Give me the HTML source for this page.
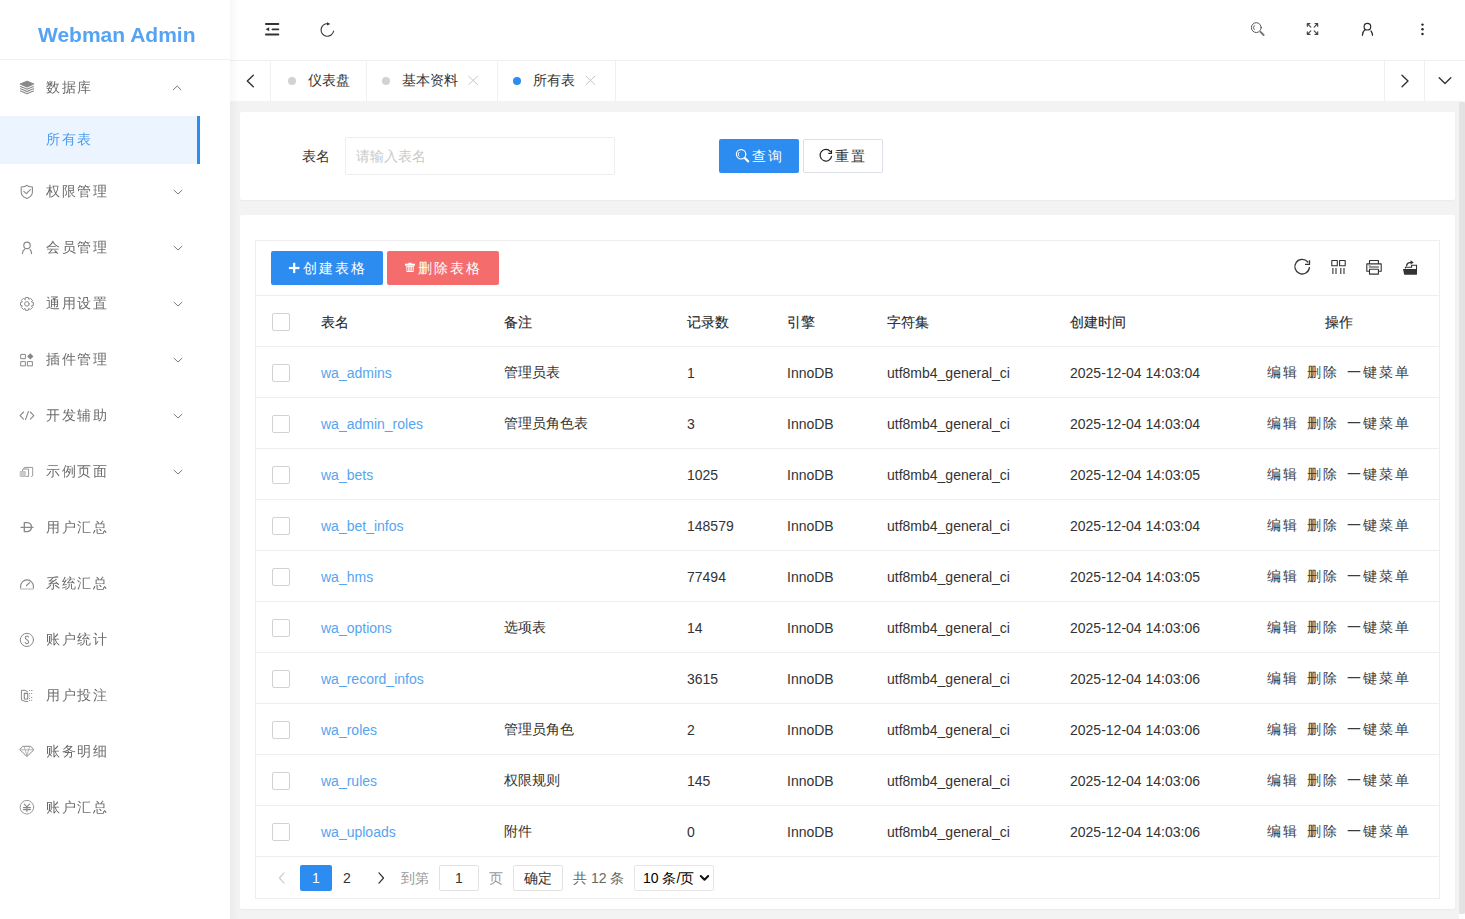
<!DOCTYPE html>
<html><head><meta charset="utf-8">
<style>
*{box-sizing:border-box;margin:0;padding:0}
html,body{width:1465px;height:919px;overflow:hidden;background:#fff}
body{font-family:"Liberation Sans",sans-serif;font-size:14px;color:#333;position:relative}
.a{position:absolute;white-space:nowrap;line-height:20px}
#content{position:absolute;left:230px;top:101px;width:1235px;height:818px;background:#f3f3f3}
#side{position:absolute;left:0;top:0;width:230px;height:919px;background:#fff}
#logo{position:absolute;left:0;top:0;width:230px;height:60px;border-bottom:1px solid #f2f2f2}
#logo span{position:absolute;left:38px;top:20px;font-size:21px;font-weight:bold;color:#55a3f2;line-height:30px;white-space:nowrap;will-change:transform}
.mi{position:absolute;left:46px;line-height:20px;font-size:14px;color:#6b6b6b;letter-spacing:1.5px;white-space:nowrap;will-change:transform}
.sel{position:absolute;left:0;top:116px;width:200px;height:48px;background:#ecf5ff}
.sel i{position:absolute;right:0;top:0;width:3px;height:48px;background:#2d8cf0}
#shadow{position:absolute;left:230px;top:0;width:9px;height:919px;background:linear-gradient(to right,rgba(0,0,0,.035),rgba(0,0,0,0))}
#hdr{position:absolute;left:230px;top:0;width:1235px;height:61px;background:#fff;border-bottom:1px solid #f0f0f0}
#tabs{position:absolute;left:230px;top:61px;width:1235px;height:40px;background:#fff}
.tsep{position:absolute;top:61px;width:1px;height:40px;background:#f0f0f0}
.tdot{position:absolute;width:8px;height:8px;border-radius:50%;background:#d2d2d2;top:77px}
.ttx{position:absolute;top:70.5px;line-height:20px;font-size:13.5px;color:#333;white-space:nowrap}
.card{position:absolute;background:#fff;border-radius:2px;box-shadow:0 1px 2px rgba(0,0,0,.04)}
.btn{position:absolute;height:34px;border-radius:2px}
.bt{position:absolute;line-height:20px;color:#fff;letter-spacing:2px;white-space:nowrap}
.th{color:#262626;-webkit-text-stroke:0.12px #262626}
.row{position:absolute;left:256px;width:1183px;height:1px;background:#eee}
.cb{position:absolute;left:272px;width:18px;height:18px;border:1px solid #d2d2d2;border-radius:2px;background:#fff}
.lk{color:#56a5f0}
.op{color:#3c3c3c;letter-spacing:2px}
.pg{position:absolute;top:865px;height:26px;border:1px solid #e2e2e2;border-radius:2px;background:#fff}
</style></head><body>
<div id="content"></div>
<div id="side">
<div id="logo"><span>Webman Admin</span></div>
<div class="sel"><i></i></div>
<div class="mi" style="top:77px">数据库</div>
<div class="mi" style="top:129px;color:#4a9cf0">所有表</div>
<div class="mi" style="top:181px">权限管理</div>
<div class="mi" style="top:237px">会员管理</div>
<div class="mi" style="top:293px">通用设置</div>
<div class="mi" style="top:349px">插件管理</div>
<div class="mi" style="top:405px">开发辅助</div>
<div class="mi" style="top:461px">示例页面</div>
<div class="mi" style="top:517px">用户汇总</div>
<div class="mi" style="top:573px">系统汇总</div>
<div class="mi" style="top:629px">账户统计</div>
<div class="mi" style="top:685px">用户投注</div>
<div class="mi" style="top:741px">账务明细</div>
<div class="mi" style="top:797px">账户汇总</div>
</div>
<div id="hdr"></div>
<div id="tabs"></div>
<div id="shadow"></div>
<div class="tsep" style="left:270px"></div>
<div class="tsep" style="left:366px"></div>
<div class="tsep" style="left:497px"></div>
<div class="tsep" style="left:615px"></div>
<div class="tsep" style="left:1384px"></div>
<div class="tsep" style="left:1424px"></div>
<div class="tdot" style="left:288px"></div><div class="ttx" style="left:308px">仪表盘</div>
<div class="tdot" style="left:382px"></div><div class="ttx" style="left:402px">基本资料</div>
<div class="tdot" style="left:513px;background:#2d8cf0"></div><div class="ttx" style="left:533px">所有表</div>
<div class="card" style="left:240px;top:112px;width:1215px;height:88px"></div>
<div class="a" style="left:302px;top:146px">表名</div>
<div class="a" style="left:345px;top:137px;width:270px;height:38px;border:1px solid #eee;border-radius:2px;background:#fff"></div>
<div class="a" style="left:356px;top:146px;color:#c9c9c9">请输入表名</div>
<div class="btn" style="left:719px;top:139px;width:80px;background:#2d8cf0"></div>
<div class="bt" style="left:752px;top:146px">查询</div>
<div class="btn" style="left:803px;top:139px;width:80px;background:#fff;border:1px solid #dcdfe6"></div>
<div class="bt" style="left:835px;top:146px;color:#333">重置</div>
<div class="card" style="left:240px;top:215px;width:1215px;height:694px"></div>
<div class="a" style="left:255px;top:240px;width:1185px;height:659px;border:1px solid #eee"></div>
<div class="row" style="top:295px"></div>
<div class="btn" style="left:271px;top:251px;width:112px;background:#2d8cf0"></div>
<div class="bt" style="left:303px;top:258px">创建表格</div>
<div class="btn" style="left:387px;top:251px;width:112px;background:#f56c6c"></div>
<div class="bt" style="left:418px;top:258px">删除表格</div>
<div class="cb" style="top:313px"></div>
<div class="a th" style="left:321px;top:312px">表名</div>
<div class="a th" style="left:504px;top:312px">备注</div>
<div class="a th" style="left:687px;top:312px">记录数</div>
<div class="a th" style="left:787px;top:312px">引擎</div>
<div class="a th" style="left:887px;top:312px">字符集</div>
<div class="a th" style="left:1070px;top:312px">创建时间</div>
<div class="a th" style="left:1325px;top:312px">操作</div>
<div class="row" style="top:346px"></div>
<div class="cb" style="top:364px"></div>
<div class="a lk" style="left:321px;top:363px">wa_admins</div>
<div class="a" style="left:504px;top:362px">管理员表</div>
<div class="a" style="left:687px;top:363px">1</div>
<div class="a" style="left:787px;top:363px">InnoDB</div>
<div class="a" style="left:887px;top:363px">utf8mb4_general_ci</div>
<div class="a" style="left:1070px;top:363px">2025-12-04 14:03:04</div>
<div class="a op" style="left:1267px;top:362px">编辑</div>
<div class="a op" style="left:1307px;top:362px">删除</div>
<div class="a op" style="left:1347px;top:362px">一键菜单</div>
<div class="row" style="top:397px"></div>
<div class="cb" style="top:415px"></div>
<div class="a lk" style="left:321px;top:414px">wa_admin_roles</div>
<div class="a" style="left:504px;top:413px">管理员角色表</div>
<div class="a" style="left:687px;top:414px">3</div>
<div class="a" style="left:787px;top:414px">InnoDB</div>
<div class="a" style="left:887px;top:414px">utf8mb4_general_ci</div>
<div class="a" style="left:1070px;top:414px">2025-12-04 14:03:04</div>
<div class="a op" style="left:1267px;top:413px">编辑</div>
<div class="a op" style="left:1307px;top:413px">删除</div>
<div class="a op" style="left:1347px;top:413px">一键菜单</div>
<div class="row" style="top:448px"></div>
<div class="cb" style="top:466px"></div>
<div class="a lk" style="left:321px;top:465px">wa_bets</div>
<div class="a" style="left:687px;top:465px">1025</div>
<div class="a" style="left:787px;top:465px">InnoDB</div>
<div class="a" style="left:887px;top:465px">utf8mb4_general_ci</div>
<div class="a" style="left:1070px;top:465px">2025-12-04 14:03:05</div>
<div class="a op" style="left:1267px;top:464px">编辑</div>
<div class="a op" style="left:1307px;top:464px">删除</div>
<div class="a op" style="left:1347px;top:464px">一键菜单</div>
<div class="row" style="top:499px"></div>
<div class="cb" style="top:517px"></div>
<div class="a lk" style="left:321px;top:516px">wa_bet_infos</div>
<div class="a" style="left:687px;top:516px">148579</div>
<div class="a" style="left:787px;top:516px">InnoDB</div>
<div class="a" style="left:887px;top:516px">utf8mb4_general_ci</div>
<div class="a" style="left:1070px;top:516px">2025-12-04 14:03:04</div>
<div class="a op" style="left:1267px;top:515px">编辑</div>
<div class="a op" style="left:1307px;top:515px">删除</div>
<div class="a op" style="left:1347px;top:515px">一键菜单</div>
<div class="row" style="top:550px"></div>
<div class="cb" style="top:568px"></div>
<div class="a lk" style="left:321px;top:567px">wa_hms</div>
<div class="a" style="left:687px;top:567px">77494</div>
<div class="a" style="left:787px;top:567px">InnoDB</div>
<div class="a" style="left:887px;top:567px">utf8mb4_general_ci</div>
<div class="a" style="left:1070px;top:567px">2025-12-04 14:03:05</div>
<div class="a op" style="left:1267px;top:566px">编辑</div>
<div class="a op" style="left:1307px;top:566px">删除</div>
<div class="a op" style="left:1347px;top:566px">一键菜单</div>
<div class="row" style="top:601px"></div>
<div class="cb" style="top:619px"></div>
<div class="a lk" style="left:321px;top:618px">wa_options</div>
<div class="a" style="left:504px;top:617px">选项表</div>
<div class="a" style="left:687px;top:618px">14</div>
<div class="a" style="left:787px;top:618px">InnoDB</div>
<div class="a" style="left:887px;top:618px">utf8mb4_general_ci</div>
<div class="a" style="left:1070px;top:618px">2025-12-04 14:03:06</div>
<div class="a op" style="left:1267px;top:617px">编辑</div>
<div class="a op" style="left:1307px;top:617px">删除</div>
<div class="a op" style="left:1347px;top:617px">一键菜单</div>
<div class="row" style="top:652px"></div>
<div class="cb" style="top:670px"></div>
<div class="a lk" style="left:321px;top:669px">wa_record_infos</div>
<div class="a" style="left:687px;top:669px">3615</div>
<div class="a" style="left:787px;top:669px">InnoDB</div>
<div class="a" style="left:887px;top:669px">utf8mb4_general_ci</div>
<div class="a" style="left:1070px;top:669px">2025-12-04 14:03:06</div>
<div class="a op" style="left:1267px;top:668px">编辑</div>
<div class="a op" style="left:1307px;top:668px">删除</div>
<div class="a op" style="left:1347px;top:668px">一键菜单</div>
<div class="row" style="top:703px"></div>
<div class="cb" style="top:721px"></div>
<div class="a lk" style="left:321px;top:720px">wa_roles</div>
<div class="a" style="left:504px;top:719px">管理员角色</div>
<div class="a" style="left:687px;top:720px">2</div>
<div class="a" style="left:787px;top:720px">InnoDB</div>
<div class="a" style="left:887px;top:720px">utf8mb4_general_ci</div>
<div class="a" style="left:1070px;top:720px">2025-12-04 14:03:06</div>
<div class="a op" style="left:1267px;top:719px">编辑</div>
<div class="a op" style="left:1307px;top:719px">删除</div>
<div class="a op" style="left:1347px;top:719px">一键菜单</div>
<div class="row" style="top:754px"></div>
<div class="cb" style="top:772px"></div>
<div class="a lk" style="left:321px;top:771px">wa_rules</div>
<div class="a" style="left:504px;top:770px">权限规则</div>
<div class="a" style="left:687px;top:771px">145</div>
<div class="a" style="left:787px;top:771px">InnoDB</div>
<div class="a" style="left:887px;top:771px">utf8mb4_general_ci</div>
<div class="a" style="left:1070px;top:771px">2025-12-04 14:03:06</div>
<div class="a op" style="left:1267px;top:770px">编辑</div>
<div class="a op" style="left:1307px;top:770px">删除</div>
<div class="a op" style="left:1347px;top:770px">一键菜单</div>
<div class="row" style="top:805px"></div>
<div class="cb" style="top:823px"></div>
<div class="a lk" style="left:321px;top:822px">wa_uploads</div>
<div class="a" style="left:504px;top:821px">附件</div>
<div class="a" style="left:687px;top:822px">0</div>
<div class="a" style="left:787px;top:822px">InnoDB</div>
<div class="a" style="left:887px;top:822px">utf8mb4_general_ci</div>
<div class="a" style="left:1070px;top:822px">2025-12-04 14:03:06</div>
<div class="a op" style="left:1267px;top:821px">编辑</div>
<div class="a op" style="left:1307px;top:821px">删除</div>
<div class="a op" style="left:1347px;top:821px">一键菜单</div>
<div class="row" style="top:856px"></div>
<div class="row" style="top:856px"></div>
<div class="a" style="left:300px;top:865px;width:32px;height:26px;background:#2d8cf0;border-radius:2px"></div>
<div class="a" style="left:312px;top:868px;color:#fff">1</div>
<div class="a" style="left:343px;top:868px">2</div>
<div class="a" style="left:401px;top:868px;color:#999">到第</div>
<div class="pg" style="left:439px;width:40px"></div>
<div class="a" style="left:455px;top:868px">1</div>
<div class="a" style="left:489px;top:868px;color:#999">页</div>
<div class="pg" style="left:513px;width:50px"></div>
<div class="a" style="left:524px;top:868px">确定</div>
<div class="a" style="left:573px;top:868px;color:#666">共 12 条</div>
<div class="pg" style="left:634px;width:80px;border-color:#e6e6e6"></div>
<div class="a" style="left:643px;top:868px;color:#000">10 条/页</div>
<div class="a" style="left:1459px;top:102px;width:6px;height:812px;background:#e3e3e3;border-radius:2px"></div>
<div class="a" style="left:1459px;top:914px;width:6px;height:5px;background:#fff"></div>
<svg width="1465" height="919" viewBox="0 0 1465 919" style="position:absolute;left:0;top:0;pointer-events:none" fill="none" stroke-linecap="round" stroke-linejoin="round">
<!-- header: fold menu -->
<g fill="#333" stroke="none">
<rect x="265" y="23" width="14.3" height="1.9" rx=".9"/>
<rect x="271.5" y="28.4" width="7.8" height="1.8" rx=".9"/>
<rect x="265" y="33.5" width="14.3" height="1.9" rx=".9"/>
<path d="M265.6 29.3 L269.2 27.3 L269.2 31.3 Z"/>
</g>
<!-- header refresh -->
<g stroke="#3a3a3a" stroke-width="1.15">
<path d="M333.6 31 A6.3 6.3 0 1 1 327.8 23.7"/>
</g>
<path d="M327 22.3 L330.3 24 L327 25.6 Z" fill="#333"/>
<!-- header search -->
<g stroke="#555" stroke-width="1">
<circle cx="1256.3" cy="27.6" r="4.9"/>
<path d="M1254.2 25.7 A2.7 2.7 0 0 0 1254.2 29.5"/>
</g>
<path d="M1260.6 32 L1263.6 35" stroke="#777" stroke-width="1.9"/>
<!-- fullscreen -->
<g stroke="#444" stroke-width="1.15">
<path d="M1307.3 23.6 L1310.8 27.1 M1307.3 23.6 L1310 23.6 M1307.3 23.6 L1307.3 26.3"/>
<path d="M1317.7 23.6 L1314.2 27.1 M1317.7 23.6 L1315 23.6 M1317.7 23.6 L1317.7 26.3"/>
<path d="M1307.3 34.4 L1310.8 30.9 M1307.3 34.4 L1310 34.4 M1307.3 34.4 L1307.3 31.7"/>
<path d="M1317.7 34.4 L1314.2 30.9 M1317.7 34.4 L1315 34.4 M1317.7 34.4 L1317.7 31.7"/>
</g>
<!-- user -->
<g stroke="#2a2a2a" stroke-width="1.2">
<circle cx="1367.4" cy="26.7" r="3.3"/>
<path d="M1365.2 29.6 Q1362.6 31.6 1362.4 35.3"/>
<path d="M1371 31 Q1372.3 32.6 1372.5 35.3"/>
</g>
<!-- more -->
<g fill="#222"><circle cx="1422.5" cy="24.6" r="1.2"/><circle cx="1422.5" cy="29.3" r="1.2"/><circle cx="1422.5" cy="34" r="1.2"/></g>
<!-- tab chevrons -->
<g stroke="#333" stroke-width="1.4">
<path d="M253.3 75.2 L247.3 81 L253.3 86.8"/>
<path d="M1402 75.2 L1408 81 L1402 86.8"/>
<path d="M1439.2 77.8 L1445 83.4 L1450.8 77.8"/>
</g>
<!-- tab close -->
<g stroke="#c8c8c8" stroke-width="1">
<path d="M468.6 76.2 L477.6 84.6 M477.6 76.2 L468.6 84.6"/>
<path d="M586 76.2 L595 84.6 M595 76.2 L586 84.6"/>
</g>
<!-- sidebar chevrons -->
<g stroke="#777" stroke-width="1">
<path d="M173.3 89.8 L177.2 86 L181 89.8"/>
<path d="M174 190.2 L178 194 L182 190.2"/>
<path d="M174 246.2 L178 250 L182 246.2"/>
<path d="M174 302.2 L178 306 L182 302.2"/>
<path d="M174 358.2 L178 362 L182 358.2"/>
<path d="M174 414.2 L178 418 L182 414.2"/>
<path d="M174 470.2 L178 474 L182 470.2"/>
</g>
<!-- sidebar icons -->
<g stroke="#888" stroke-width="1.1">
<!-- database -->
<path d="M20.3 84 L27 81.2 L33.7 84 L27 86.9 Z" fill="#888"/>
<path d="M20.5 86.6 L27 89.2 L33.5 86.6 M20.5 88.8 L27 91.5 L33.5 88.8 M20.5 91 L27 93.7 L33.5 91" stroke-dasharray="1.4 .6"/>
<!-- shield -->
<path d="M26.8 185.3 Q25.5 186.6 21.2 187 L21.2 192.5 Q21.5 196.5 26.8 198.4 Q32 196.5 32.4 192.5 L32.4 187 Q28.2 186.6 26.8 185.3 Z"/>
<path d="M23.8 191.4 L26.3 193.6 L30.4 189.6"/>
<!-- user -->
<circle cx="27" cy="245.4" r="3.2" stroke-width="1.2"/>
<path d="M24.6 249.3 Q22.6 250.7 22.4 253.5 M30.1 249.6 Q31.4 251 31.6 253.5" stroke-width="1.2"/>
<!-- gear -->
<path d="M25.06 299.36 L25.42 297.47 L28.38 297.47 L28.74 299.36 L28.81 299.39 L30.40 298.30 L32.50 300.40 L31.41 301.99 L31.44 302.06 L33.33 302.42 L33.33 305.38 L31.44 305.74 L31.41 305.81 L32.50 307.40 L30.40 309.50 L28.81 308.41 L28.74 308.44 L28.38 310.33 L25.42 310.33 L25.06 308.44 L24.99 308.41 L23.40 309.50 L21.30 307.40 L22.39 305.81 L22.36 305.74 L20.47 305.38 L20.47 302.42 L22.36 302.06 L22.39 301.99 L21.30 300.40 L23.40 298.30 L24.99 299.39 Z" stroke-width="1" stroke="#8a8a8a"/>
<circle cx="26.9" cy="303.9" r="2.3" stroke-width="1"/>
<!-- apps -->
<rect x="21.1" y="354.4" width="4.3" height="4.3" stroke-width="1"/>
<rect x="21.1" y="361.6" width="4.3" height="4.3" stroke-width="1"/>
<rect x="27.8" y="361.6" width="4.6" height="4.3" stroke-width="1"/>
<path d="M30.3 353.2 L33.5 356.4 L30.3 359.6 L27.1 356.4 Z" fill="#888" stroke="none"/>
<!-- code -->
<path d="M23.5 412 L20.1 415.6 L23.5 419.1 M30.4 412 L33.8 415.6 L30.4 419.1 M28.4 411.5 L25.5 419.6" stroke-width="1.1"/>
<!-- pages -->
<path d="M23.8 469 L24.3 467.4 L32.7 467.4 L32.7 475.8 L31.5 476.5 M22.5 470.6 L23 469 L28.6 469 L28.6 476.4 L26 476.4" stroke="#999" stroke-width="1"/>
<rect x="20.6" y="471.6" width="4.6" height="4.8" fill="#ccc" stroke="#bbb" stroke-width="1"/>
<!-- D -->
<path d="M24.3 522.6 L24.3 531.6 L27.3 531.6 Q31.5 531.3 31.5 527.1 Q31.5 522.9 27.3 522.6 Z" stroke-width="1.3"/>
<path d="M21 527.4 L33 527.4" stroke-width="1.1"/>
<!-- gauge -->
<path d="M20.6 588.3 L20.6 586.3 A6.4 6.4 0 0 1 33.4 586.3 L33.4 588.3" stroke-width="1.1"/>
<path d="M20.6 589 L33.4 589" stroke="#ccc" stroke-width="1.3"/>
<path d="M26.5 585.5 L29.6 582.6" stroke-width="1.2"/>
<!-- dollar -->
<circle cx="26.9" cy="639.9" r="6.6" stroke-width="1"/>
<path d="M28.5 637 Q28 636 27 636 Q25.3 636 25.3 637.6 Q25.3 639 27 639.8 Q28.6 640.6 28.6 642.1 Q28.6 643.7 27 643.7 Q25.6 643.7 25.2 642.6" stroke-width="1.1"/>
<!-- bets -->
<path d="M27.6 691.8 L25 690.3 L21.4 690.3 L21.4 700 L25 701.3 L27.7 701.5" stroke-width="1"/>
<rect x="24.3" y="693.4" width="3.4" height="5.6" stroke-width="1.1"/>
<g fill="#999" stroke="none"><rect x="29" y="690" width="1" height="1"/><rect x="31" y="690" width="1.5" height="1"/><rect x="29" y="693" width="1" height="1"/><rect x="31" y="693" width="1.2" height="1"/><rect x="29" y="695.5" width="1" height="1"/><rect x="31" y="697" width="1.2" height="1"/><rect x="29" y="698" width="1" height="1"/><rect x="29" y="700" width="1" height="1"/><rect x="31" y="699.8" width="1.2" height="1"/></g>
<!-- diamond -->
<path d="M23.1 746.3 L30.7 746.3 L33.8 749.8 L26.9 756.6 L20.1 749.8 Z" stroke-width="1"/>
<path d="M20.3 749.8 L33.6 749.8 M24 746.5 L25.3 749.8 L26.9 756.4 L28.5 749.8 L29.8 746.5" stroke="#aaa" stroke-width=".9"/>
<!-- yen -->
<circle cx="26.9" cy="807.2" r="6.8" stroke="#999" stroke-width="1"/>
<path d="M24.3 804.2 L26.9 806.8 L29.5 804.2 M23.4 807.6 L30.5 807.6 M23.4 809.6 L30.5 809.6 M26.9 807 L26.9 811.6" stroke-width="1.1"/>
</g>
<!-- query button search (white) -->
<g stroke="#fff" stroke-width="1.2">
<circle cx="741.1" cy="154.3" r="4.7"/>
<path d="M739 152.4 A2.5 2.5 0 0 0 739 156.2" stroke-width="1"/>
</g>
<path d="M745 158.2 L748.2 161.4" stroke="#fff" stroke-width="2.2"/>
<!-- reset refresh -->
<path d="M831.6 156.4 A5.8 5.8 0 1 1 830.4 151.6" stroke="#222" stroke-width="1.2"/>
<path d="M831.5 150.2 L831.5 153.3 L828.3 153.3" stroke="#222" stroke-width="1.2" stroke-linecap="butt"/>
<!-- plus -->
<g fill="#fff"><rect x="288.9" y="266.9" width="10.5" height="2.2"/><rect x="293.1" y="262.8" width="2.2" height="10.3"/></g>
<!-- trash -->
<g fill="#fff">
<rect x="405" y="263.7" width="10" height="2"/>
<rect x="408.3" y="262.8" width="3.4" height="1.2"/>
<path d="M406.3 266 L413.8 266 L413.6 272 L406.5 272 Z M407.3 266.8 L407.3 271 L408.3 271 L408.3 266.8 Z M409.5 266.8 L409.5 271 L410.5 271 L410.5 266.8 Z M411.7 266.8 L411.7 271 L412.7 271 L412.7 266.8 Z" fill-rule="evenodd"/>
</g>
<!-- table toolbar: refresh -->
<path d="M1309.4 267.6 A7.3 7.3 0 1 1 1307.8 262" stroke="#333" stroke-width="1.3"/>
<path d="M1309.5 260.2 L1309.5 264.4 L1305 264.4" stroke="#333" stroke-width="1.3" stroke-linecap="butt"/>
<!-- columns -->
<g stroke="#333" stroke-width="1.1">
<rect x="1331.8" y="260.5" width="5.5" height="5.2"/>
<rect x="1339.6" y="260.5" width="5.6" height="5.2"/>
<path d="M1332.9 268 L1332.9 274 M1336 268 L1336 274 M1340.8 268 L1340.8 274 M1344 268 L1344 274" stroke-linecap="butt"/>
</g>
<!-- print -->
<g stroke="#333" stroke-width="1.1">
<path d="M1369.5 263.5 L1369.5 260.5 L1378.4 260.5 L1378.4 263.5"/>
<path d="M1369 271.2 L1366.8 271.2 L1366.8 263.9 L1381.2 263.9 L1381.2 271.2 L1379 271.2"/>
<path d="M1369.5 269.2 L1369.5 274.1 L1378.4 274.1 L1378.4 269.2 Z"/>
<path d="M1369.3 267 L1378.6 267"/>
</g>
<path d="M1368.8 265.6 L1370.5 265.6" stroke="#999" stroke-width=".8"/>
<!-- export -->
<g fill="#333">
<path d="M1403 269 L1416.9 269 L1416.9 274.7 L1404.2 274.7 Z"/>
</g>
<path d="M1405.4 268.6 L1405.4 267.2 L1411.6 267.2 L1411.6 265.3 L1416.5 265.3 L1416.5 274" stroke="#333" stroke-width="1.1" stroke-linecap="butt" stroke-linejoin="miter"/>
<path d="M1406.6 265.8 Q1406.8 262.6 1411.5 262.4" stroke="#333" stroke-width="1.3"/>
<path d="M1410.6 260.2 L1413.7 262.4 L1410.6 264.6 Z" fill="#333"/>
<!-- pagination chevrons -->
<path d="M284 872.8 L279.5 878 L284 883.2" stroke="#ccc" stroke-width="1.2"/>
<path d="M379 872.8 L383.5 878 L379 883.2" stroke="#333" stroke-width="1.2"/>
<path d="M700.8 876 L704.5 879.8 L708.2 876" stroke="#111" stroke-width="2"/>
</svg>

</body></html>
